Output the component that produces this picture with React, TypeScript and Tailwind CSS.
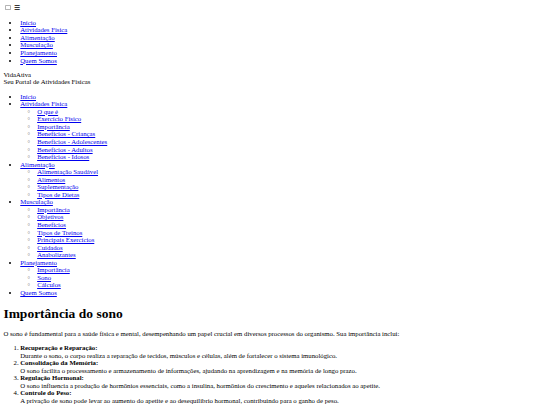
import React from 'react'

const MENU = ['Início', 'Atividades Física', 'Alimentação', 'Musculação', 'Planejamento', 'Quem Somos']

const SITE_MAP: { label: string; children: string[] }[] = [
  { label: 'Início', children: [] },
  {
    label: 'Atividades Física',
    children: [
      'O que é',
      'Exercício Físico',
      'Importância',
      'Benefícios - Crianças',
      'Benefícios - Adolescentes',
      'Benefícios - Adultos',
      'Benefícios - Idosos'
    ]
  },
  {
    label: 'Alimentação',
    children: ['Alimentação Saudável', 'Alimentos', 'Suplementação', 'Tipos de Dietas']
  },
  {
    label: 'Musculação',
    children: [
      'Importância',
      'Objetivos',
      'Benefícios',
      'Tipos de Treinos',
      'Principais Exercícios',
      'Cuidados',
      'Anabolizantes'
    ]
  },
  { label: 'Planejamento', children: ['Importância', 'Sono', 'Cálculos'] },
  { label: 'Quem Somos', children: [] }
]

const BENEFITS = [
  {
    title: 'Recuperação e Reparação:',
    text: 'Durante o sono, o corpo realiza a reparação de tecidos, músculos e células, além de fortalecer o sistema imunológico.'
  },
  {
    title: 'Consolidação da Memória:',
    text: 'O sono facilita o processamento e armazenamento de informações, ajudando na aprendizagem e na memória de longo prazo.'
  },
  {
    title: 'Regulação Hormonal:',
    text: 'O sono influencia a produção de hormônios essenciais, como a insulina, hormônios do crescimento e aqueles relacionados ao apetite.'
  },
  {
    title: 'Controle do Peso:',
    text: 'A privação de sono pode levar ao aumento do apetite e ao desequilíbrio hormonal, contribuindo para o ganho de peso.'
  },
  {
    title: 'Saúde Mental:',
    text: 'Dormir bem ajuda a reduzir o estresse, a ansiedade e melhora o humor.'
  }
]

function Link({ children }: { children: React.ReactNode }) {
  return (
    <a href="#" className="text-[#0000ee] underline">
      {children}
    </a>
  )
}

export default function App() {
  // page is laid out at 1280px and scaled down to the 540px window
  return (
    <div className="[zoom:0.421875] w-[1280px] min-h-[960px] bg-white p-2 text-[16px] leading-[1.12] text-black font-['Liberation_Serif','Times_New_Roman',serif]">
      <header>
        <input
          type="checkbox"
          id="menu-toggle"
          className="appearance-none inline-block w-[13px] h-[13px] m-[3px_3px_3px_4px] align-[-2px] border border-[#b5b5b5] rounded-[2px] bg-white"
        />
        <label htmlFor="menu-toggle"> ☰</label>

        <nav>
          <ul className="list-disc pl-10 my-4">
            {MENU.map((item) => (
              <li key={item}>
                <Link>{item}</Link>
              </li>
            ))}
          </ul>
        </nav>

        <div>
          <div>VidaAtiva</div>
          <div>Seu Portal de Atividades Físicas</div>
        </div>

        <nav>
          <ul className="list-disc pl-10 my-4">
            {SITE_MAP.map((group) => (
              <li key={group.label}>
                <Link>{group.label}</Link>
                {group.children.length > 0 && (
                  <ul className="list-['◦___'] pl-10 marker:text-[#444] marker:font-['DejaVu_Sans',sans-serif]">
                    {group.children.map((child) => (
                      <li key={child}>
                        <Link>{child}</Link>
                      </li>
                    ))}
                  </ul>
                )}
              </li>
            ))}
          </ul>
        </nav>
      </header>

      <main>
        <section>
          <h1 className="text-[2em] font-bold my-[0.67em]">Importância do sono</h1>
          <p className="my-4">
            O sono é fundamental para a saúde física e mental, desempenhando um papel crucial em diversos processos do
            organismo. Sua importância inclui:
          </p>
          <ol className="list-decimal pl-10 my-4">
            {BENEFITS.map((b) => (
              <li key={b.title}>
                <strong className="font-bold">{b.title}</strong>
                <br />
                {b.text}
              </li>
            ))}
          </ol>
        </section>
      </main>
    </div>
  )
}
